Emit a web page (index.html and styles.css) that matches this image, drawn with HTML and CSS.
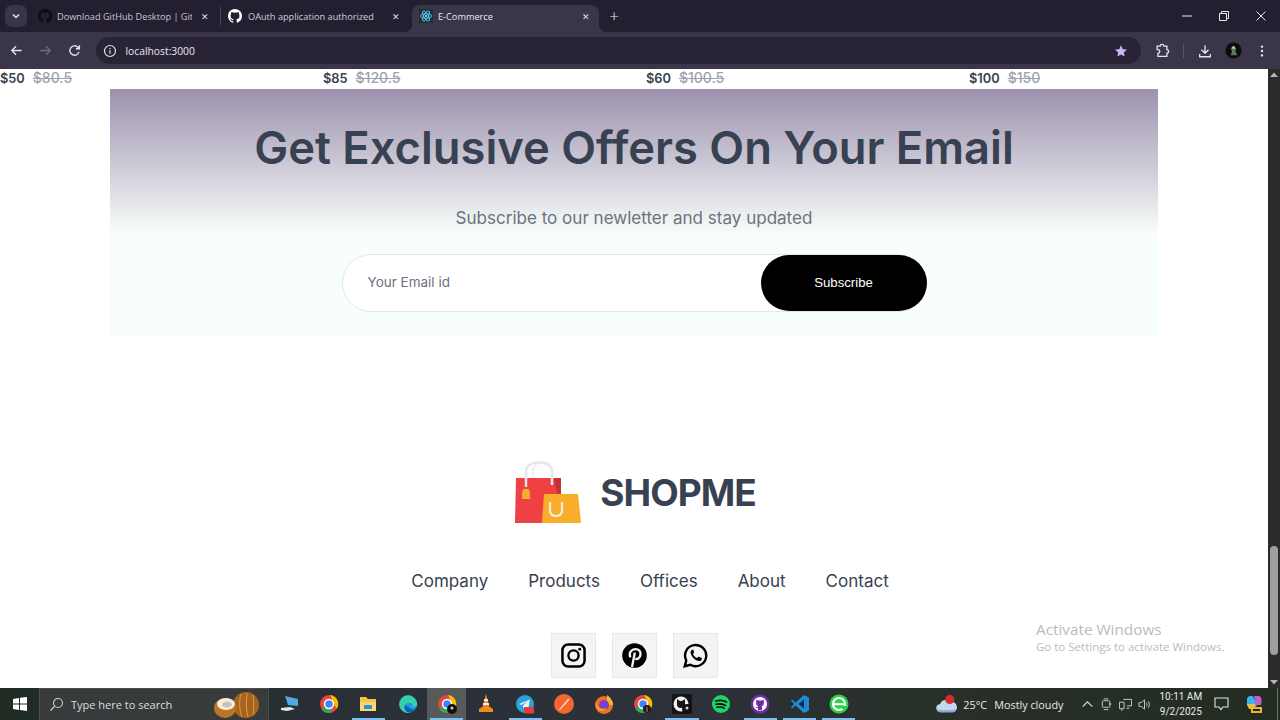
FILE: index.html
```html
<!DOCTYPE html>
<html lang="en">
<head>
<meta charset="utf-8">
<title>E-Commerce</title>
<link rel="stylesheet" href="styles.css">
</head>
<body>
<header class="chrome">
  <div class="tabstrip">
    <div class="tabmenu"><svg width="10" height="10" viewBox="0 0 10 10"><path d="M2 3.500 5 6.500 8 3.500" fill="none" stroke="#e8e6ee" stroke-width="1.500"/></svg></div>
    <div class="tab tab-a">
      <svg class="favicon" viewBox="0 0 16 16"><path fill="#0d0b12" d="M8 0C3.580 0 0 3.580 0 8c0 3.540 2.290 6.530 5.470 7.590.4.070.55-.17.55-.38v-1.340c-2.230.48-2.690-1.070-2.690-1.070-.36-.92-.89-1.170-.89-1.170-.73-.5.050-.49.050-.49.8.060 1.230.83 1.230.83.71 1.220 1.870.87 2.330.66.070-.52.28-.87.51-1.070-1.780-.2-3.640-.89-3.640-3.950 0-.87.31-1.590.82-2.150-.08-.2-.36-1.020.08-2.120 0 0 .67-.21 2.200.82a7.600 7.600 0 0 1 4 0c1.530-1.040 2.200-.82 2.200-.82.440 1.100.160 1.920.080 2.120.51.560.82 1.270.82 2.150 0 3.070-1.870 3.750-3.650 3.950.29.250.54.730.54 1.480v2.190c0 .21.150.460.550.380A8.010 8.010 0 0 0 16 8c0-4.420-3.580-8-8-8z"/></svg>
      <span class="tabtitle">Download GitHub Desktop | Git</span>
      <span class="tabclose">✕</span>
    </div>
    <i class="tabsep"></i>
    <div class="tab tab-b">
      <svg class="favicon" viewBox="0 0 16 16"><path fill="#fff" d="M8 0C3.580 0 0 3.580 0 8c0 3.540 2.290 6.530 5.470 7.590.4.070.55-.17.55-.38v-1.340c-2.230.48-2.690-1.070-2.690-1.070-.36-.92-.89-1.170-.89-1.170-.73-.5.050-.49.050-.49.8.060 1.230.83 1.230.83.71 1.220 1.870.87 2.330.66.070-.52.28-.87.51-1.070-1.780-.2-3.640-.89-3.640-3.950 0-.87.31-1.590.82-2.150-.08-.2-.36-1.020.08-2.120 0 0 .67-.21 2.200.82a7.600 7.600 0 0 1 4 0c1.530-1.040 2.200-.82 2.200-.82.440 1.100.160 1.920.080 2.120.51.560.82 1.270.82 2.150 0 3.070-1.870 3.750-3.650 3.950.29.250.54.730.54 1.480v2.190c0 .21.150.460.550.380A8.010 8.010 0 0 0 16 8c0-4.420-3.580-8-8-8z"/></svg>
      <span class="tabtitle">OAuth application authorized</span>
      <span class="tabclose">✕</span>
    </div>
    <div class="tab tab-active">
      <svg class="favicon" viewBox="0 0 16 16"><rect width="16" height="16" fill="#20303a"/><g fill="none" stroke="#61dafb" stroke-width=".9"><ellipse cx="8" cy="8" rx="6.500" ry="2.600"/><ellipse cx="8" cy="8" rx="6.500" ry="2.600" transform="rotate(60 8 8)"/><ellipse cx="8" cy="8" rx="6.500" ry="2.600" transform="rotate(120 8 8)"/></g><circle cx="8" cy="8" r="1.300" fill="#61dafb"/></svg>
      <span class="tabtitle">E-Commerce</span>
      <span class="tabclose">✕</span>
    </div>
    <span class="newtab">+</span>
    <div class="winctl">
      <svg width="10" height="10" viewBox="0 0 10 10"><path d="M0 5h10" stroke="#e8e6ee"/></svg>
      <svg width="10" height="10" viewBox="0 0 10 10"><path d="M.5 2.500h7v7h-7zM2.500 2.500v-2h7v7h-2" fill="none" stroke="#e8e6ee"/></svg>
      <svg width="10" height="10" viewBox="0 0 10 10"><path d="M.5.5l9 9M9.500.5l-9 9" stroke="#e8e6ee"/></svg>
    </div>
  </div>
  <div class="toolbar">
    <svg class="navicon" viewBox="0 0 16 16"><path d="M13.500 8H3M7.500 3.500 3 8l4.500 4.500" fill="none" stroke="#e3e1ea" stroke-width="1.500"/></svg>
    <svg class="navicon" viewBox="0 0 16 16"><path d="M2.500 8H13M8.500 3.500 13 8l-4.500 4.500" fill="none" stroke="#6f6b7c" stroke-width="1.500"/></svg>
    <svg class="navicon" viewBox="0 0 16 16"><path d="M12.800 9.500A5 5 0 1 1 11.500 4.400L13 6M13.200 2.500V6.200H9.500" fill="none" stroke="#e3e1ea" stroke-width="1.500"/></svg>
    <div class="omnibox">
      <svg class="infoicon" viewBox="0 0 14 14"><circle cx="7" cy="7" r="5.500" fill="none" stroke="#e3e1ea" stroke-width="1.200"/><path d="M7 6.200v3.600M7 4v1.200" stroke="#e3e1ea" stroke-width="1.200"/></svg>
      <span class="url">localhost:3000</span>
      <svg class="star" viewBox="0 0 16 16"><path fill="#c9b8f5" d="M8 1.500l2 4.400 4.800.5-3.600 3.200 1 4.700L8 11.900l-4.200 2.400 1-4.700L1.200 6.400 6 5.900z"/></svg>
    </div>
    <svg class="exticon" viewBox="0 0 18 18"><path d="M3.500 3.500H7a2 2 0 0 1 4 0h3.500V7.500a2 2 0 0 1 0 4v3.500H4.500V11.500a2 2 0 0 0 0-4H3.500z" fill="none" stroke="#e3e1ea" stroke-width="1.500"/></svg>
    <i class="toolsep"></i>
    <svg class="dlicon" viewBox="0 0 18 18"><path d="M9 2.500v8.500M5 7.500 9 11.500l4-4M3 12.500v3h12v-3" fill="none" stroke="#e3e1ea" stroke-width="1.500"/></svg>
    <svg class="avatar" viewBox="0 0 18 18"><circle cx="9" cy="9" r="8.500" fill="#0c0b10"/><path d="M6 6.500 9 4l3 3-1 3 2 4H6l1.500-4z" fill="#5b7a5a"/><circle cx="9" cy="6" r="1.500" fill="#c9c2b8"/></svg>
    <svg class="dots" viewBox="0 0 4 16"><circle cx="2" cy="3" r="1.400" fill="#e3e1ea"/><circle cx="2" cy="8" r="1.400" fill="#e3e1ea"/><circle cx="2" cy="13" r="1.400" fill="#e3e1ea"/></svg>
  </div>
</header>

<div class="viewport">
  <main class="page">
    <div class="prices">
      <p class="price"><b>$50</b><s>$80.5</s></p>
      <p class="price"><b>$85</b><s>$120.5</s></p>
      <p class="price"><b>$60</b><s>$100.5</s></p>
      <p class="price"><b>$100</b><s>$150</s></p>
    </div>
    <section class="offers">
      <h1>Get Exclusive Offers On Your Email</h1>
      <p class="sub">Subscribe to our newletter and stay updated</p>
      <form class="subscribe">
        <span class="placeholder">Your Email id</span>
        <span class="btn">Subscribe</span>
      </form>
    </section>
    <footer class="footer">
      <div class="brand">
        <svg class="bag" viewBox="0 0 66 63">
          <path d="M18 17V10C18 5 21 2 26 2" fill="none" stroke="#eef0f3" stroke-width="2"/>
          <path d="M11 24V11C11 4 16 1.500 24 1.500S37 4 37 11V17" fill="none" stroke="#e4e7ec" stroke-width="2.500"/>
          <path d="M1 17H46V62H0z" fill="#ef4044"/>
          <path d="M39 17H46V33H42z" fill="#c43237"/>
          <path d="M11 17V26" stroke="#e4e7ec" stroke-width="2.500"/>
          <path d="M37 17V24" stroke="#e4e7ec" stroke-width="2.500"/>
          <path d="M7 31 8.500 28H13.500L15 31V38H7z" fill="#f9ae2b"/>
          <path d="M29 33H63L66 62H27z" fill="#f9ae2b"/>
          <path d="M35 41V49C35 53 37 55 41 55S47 53 47 49V41" fill="none" stroke="#f6eddc" stroke-width="2.200"/>
        </svg>
        <span class="wordmark">SHOPME</span>
      </div>
      <nav class="links"><a>Company</a><a>Products</a><a>Offices</a><a>About</a><a>Contact</a></nav>
      <div class="socials">
        <span class="social"><svg viewBox="0 0 26 26"><rect x="1.500" y="1.500" width="23" height="23" rx="6" fill="none" stroke="#000" stroke-width="2.600"/><circle cx="13" cy="13" r="5.300" fill="none" stroke="#000" stroke-width="2.400"/><circle cx="19.500" cy="6.500" r="1.500"/></svg></span>
        <span class="social"><svg viewBox="0 0 26 26"><circle cx="13" cy="13" r="12.800"/><path d="M8.600 15C6.700 9.800 10 6.400 14 6.400c3.800 0 5.700 2.600 5.200 5.800-.5 3.200-3 5.200-5.500 4.200" fill="none" stroke="#f3f4f6" stroke-width="2.400"/><path d="M13.400 9.800 10.400 25" fill="none" stroke="#f3f4f6" stroke-width="2.400"/></svg></span>
        <span class="social"><svg viewBox="0 0 26 26"><path d="M1.800 24.200l1.600-6A11 11 0 1 1 7.600 22.600z" fill="none" stroke="#000" stroke-width="2.500"/><path d="M9.600 7c-1.800.9-2.300 3-1 5.400 1.500 3 4 5.200 6.800 6.100 2 .6 3.800-.1 4.300-1.900.1-.5 0-.8-.4-1l-2.600-1.300c-.4-.2-.7-.1-1 .2l-1 1.200c-2-.8-3.500-2.300-4.400-4.300l.9-1c.3-.3.3-.6.200-1L10.900 7.300c-.2-.4-.8-.5-1.300-.3z"/></svg></span>
      </div>
    </footer>
    <div class="watermark"><strong>Activate Windows</strong><span>Go to Settings to activate Windows.</span></div>
  </main>
  <aside class="scrollbar">
    <svg width="12" height="12" viewBox="0 0 12 12"><path d="M6 3.500 10 8H2z" fill="#b4b4b4"/></svg>
    <div class="track"><i class="thumb"></i></div>
    <svg width="12" height="12" viewBox="0 0 12 12"><path d="M6 8.500 10 4H2z" fill="#b4b4b4"/></svg>
  </aside>
</div>

<div class="taskbar">
  <div class="start"><svg width="14" height="14" viewBox="0 0 14 14"><path fill="#fff" d="M0 2l6-1v5.500H0zM7 .8 14 0v6.500H7zM0 7.500h6V13l-6-1zM7 7.500h7V14l-7-1z"/></svg></div>
  <div class="search">
    <svg width="15" height="15" viewBox="0 0 15 15"><circle cx="9" cy="6" r="4.500" fill="none" stroke="#cfd2cf" stroke-width="1.100"/><path d="M5.800 9.200 1.500 13.500" stroke="#cfd2cf" stroke-width="1.200"/></svg>
    <span>Type here to search</span>
    <svg class="coconut" width="46" height="28" viewBox="0 0 46 28"><ellipse cx="32" cy="14" rx="13" ry="13" fill="#a8641d"/><path d="M27 3c-2 7-2 15 1 23M33 2c-1 8-1 16 1 24M39 4c1 6 1 14 0 20" stroke="#d9984a" fill="none"/><ellipse cx="11" cy="17" rx="11" ry="10" fill="#bd7424"/><ellipse cx="12" cy="13" rx="9" ry="6" fill="#f6efe0"/><ellipse cx="13" cy="13.500" rx="5" ry="3" fill="#c9c4b6"/></svg>
  </div>
  <div class="apps">
    <span class="app"><svg viewBox="0 0 20 20"><path d="M5 2l13 3v7L8 11z" fill="#4fa8e0"/><path d="M1 14l9-1 5 2-8 2-6-1z" fill="#dfe6ee"/></svg></span>
    <span class="app"><svg viewBox="0 0 20 20"><circle cx="10" cy="10" r="9" fill="#e8453c"/><path d="M10 10 2.200 14.500A9 9 0 0 0 10 19c1 0 2-.2 3-.5z" fill="#34a853"/><path d="M10 1a9 9 0 0 1 8.300 13L13 6z" fill="#fbbc05" transform="rotate(8 10 10)"/><circle cx="10" cy="10" r="4.500" fill="#4285f4" stroke="#fff" stroke-width="1.500"/></svg></span>
    <span class="app is-open"><svg viewBox="0 0 20 20"><path d="M2 3h6l2 2h8v12H2z" fill="#f5c542"/><path d="M2 8h16v9H2z" fill="#f7d774"/><rect x="6" y="11" width="8" height="4" fill="#2f8fd6"/></svg></span>
    <span class="app"><svg viewBox="0 0 20 20"><circle cx="10" cy="10" r="9" fill="#1b9de2"/><path d="M1.500 12c1 5 7 8 11 6.500C9 19 5 15 7 11c1-2 5-3 7-1.500 1 1 1 2 0 3h5c1-4-2-11-9-11C5 1.500 2 5 1.500 12z" fill="#38d0a5"/><path d="M7 11c-2 4 2 8 5.500 7.500 2-.5 4-1.500 5.500-3.500-3 1-6 .5-7-1.500z" fill="#0e5fb0"/></svg></span>
    <span class="app is-active is-open"><svg viewBox="0 0 20 20"><circle cx="10" cy="10" r="9" fill="#e8453c"/><path d="M10 10 2.200 14.500A9 9 0 0 0 10 19c1 0 2-.2 3-.5z" fill="#34a853"/><path d="M10 1a9 9 0 0 1 8.300 13L13 6z" fill="#fbbc05" transform="rotate(8 10 10)"/><circle cx="10" cy="10" r="4.500" fill="#4285f4" stroke="#fff" stroke-width="1.500"/><circle cx="15" cy="15" r="5" fill="#111"/><circle cx="15" cy="14" r="1.500" fill="#ccc"/></svg></span>
    <span class="app"><svg viewBox="0 0 20 20"><path d="M10 0l3.500 13h-7z" fill="#f5831f"/><path d="M8.300 5h3.400l.6 2.300H7.700zM7.300 9h5.400l.5 2H6.800z" fill="#f3f3f3"/><path d="M3 15l3-2h8l3 2v3H3z" fill="#f08a1d"/></svg></span>
    <span class="app is-open"><svg viewBox="0 0 20 20"><circle cx="10" cy="10" r="9" fill="#2aa3db"/><path d="M4 10l11-4.500-2 10-3.500-2.500-1.500 1.500V11.500l5-4.500-6.500 4z" fill="#eaf6fc"/><rect x="9" y="13" width="10" height="6.500" rx="1" fill="#e53c3c"/></svg></span>
    <span class="app"><svg viewBox="0 0 20 20"><circle cx="10" cy="10" r="10" fill="#f4662d"/><path d="M5 15.500 14 5c.8-.7 1.800.3 1.200 1L6 16z" fill="#fbe3d5"/></svg></span>
    <span class="app"><svg viewBox="0 0 20 20"><circle cx="10" cy="11" r="9" fill="#f16f23"/><path d="M13 1c3 2 6 6 6 10h-6z" fill="#fcb32c"/><circle cx="10" cy="11" r="5" fill="#7a3fd0"/><path d="M2 8c1 6 6 8 11 6-2 3-8 5-11-1z" fill="#f9a01b"/></svg></span>
    <span class="app"><svg viewBox="0 0 20 20"><circle cx="10" cy="10" r="9" fill="#e8453c"/><path d="M10 10 2.200 14.500A9 9 0 0 0 10 19c1 0 2-.2 3-.5z" fill="#34a853"/><path d="M10 1a9 9 0 0 1 8.300 13L13 6z" fill="#fbbc05" transform="rotate(8 10 10)"/><circle cx="10" cy="10" r="4.500" fill="#4285f4" stroke="#fff" stroke-width="1.500"/><circle cx="14" cy="15" r="4" fill="#1c1c1c"/><rect x="13.300" y="13" width="1.400" height="5" fill="#c44"/></svg></span>
    <span class="app is-open"><svg viewBox="0 0 20 20"><rect width="20" height="20" rx="2" fill="#141414"/><circle cx="9" cy="10" r="7.500" fill="#f1f1f1"/><path d="M5 5l3 2h2l3-2v5c0 3-1.500 4-4 4s-4-1-4-4z" fill="#141414"/><circle cx="15" cy="15" r="5" fill="#111"/><circle cx="15" cy="14" r="1.500" fill="#ccc"/></svg></span>
    <span class="app"><svg viewBox="0 0 20 20"><circle cx="10" cy="10" r="9" fill="#1ed760"/><path d="M4.500 7c4-1 8-1 11 1M5 10.300c3.500-.8 7-.5 9.500 1.200M5.800 13.300c2.800-.6 5.500-.4 7.500 1" fill="none" stroke="#111" stroke-width="1.600" stroke-linecap="round"/></svg></span>
    <span class="app is-open"><svg viewBox="0 0 20 20"><circle cx="10" cy="10" r="9.500" fill="#6f2da8"/><circle cx="10" cy="10" r="7" fill="#fff"/><path d="M6.500 5.500l2 1h3l2-1 .3 2.500c.5 2.500-1 4-2.300 4.200.5.500.5 1 .5 1.500v2.500H8V14c-1.500.3-2.200-.4-2.700-1.300.6.200 1.500.8 2.700.3 0-.3.100-.6.400-.8C7 12 5.800 10.500 6.200 8z" fill="#6f2da8"/></svg></span>
    <span class="app is-open"><svg viewBox="0 0 20 20"><path d="M14 1l5 2.500v13L14 19 5.500 11.500 2 14.500.8 13.600 4 10 .8 6.400 2 5.500l3.500 3z" fill="#1f8ad2"/><path d="M14 5.500 8.500 10l5.500 4.500z" fill="#0c2a44"/></svg></span>
    <span class="app is-open"><svg viewBox="0 0 20 20"><circle cx="10" cy="10" r="9.500" fill="#2dd24b"/><circle cx="10" cy="10" r="6" fill="none" stroke="#fff" stroke-width="2.200"/><path d="M4.500 10.200h11" stroke="#fff" stroke-width="2"/><path d="M13 12h5v3h-5z" fill="#2dd24b"/></svg></span>
  </div>
  <div class="tray">
    <svg class="weather" width="22" height="22" viewBox="0 0 24 22"><path d="M5 20a4.500 4.500 0 0 1-.5-9C6 6 12 5 15 9a5 5 0 0 1 4 11z" fill="#c4d7ef"/><path d="M1 17c5 1 15 1 21 0a5 5 0 0 1-3 3H5a4.500 4.500 0 0 1-4-3z" fill="#86a9d8"/><circle cx="15" cy="6" r="5" fill="#d22c2c"/></svg>
    <span class="temp">25°C</span><span class="cond">Mostly cloudy</span>
    <svg class="tray-i chev" viewBox="0 0 12 12"><path d="M1.500 8 6 3.500 10.500 8" fill="none" stroke="#d8dcd8" stroke-width="1.100"/></svg>
    <svg class="tray-i" viewBox="0 0 12 14"><rect x="1.500" y="3" width="8" height="7" rx="1" fill="none" stroke="#cfd3cf"/><path d="M3 1h5M3 12.500h5M10.500 5.500v2" stroke="#cfd3cf"/></svg>
    <svg class="tray-i net" viewBox="0 0 14 14"><path d="M4.500 1.500h9v7h-5M.5 4.500h5v7h-5zM2 13h2M8 11h3" fill="none" stroke="#cfd3cf"/></svg>
    <svg class="tray-i" viewBox="0 0 14 14"><path d="M1 5h2.500L7 2v10L3.500 9H1z" fill="none" stroke="#cfd3cf"/><path d="M9 5c.8 1 .8 3 0 4M11 3.500c1.600 2 1.600 5 0 7" fill="none" stroke="#cfd3cf"/></svg>
    <div class="clock"><span>10:11 AM</span><span>9/2/2025</span></div>
    <svg class="notif" width="15" height="14" viewBox="0 0 15 14"><path d="M1 1h13v9H9l-2 2.500L5 10H1z" fill="none" stroke="#e4e6e4" stroke-width="1.100"/></svg>
    <svg class="copilot" width="20" height="20" viewBox="0 0 20 20"><path d="M3 5c1-4 6-4 7-1l3 8H3z" fill="#38b6e8"/><path d="M10 2h5c3 1 3 5 2 9h-5z" fill="#c45ed0"/><path d="M3 10h8l1 5H5z" fill="#e7c53a"/><rect x="7" y="13" width="11" height="6" fill="#e8b923"/><rect x="9" y="15" width="7" height="2" fill="#222"/></svg>
    <i class="showdesk"></i>
  </div>
</div>
</body>
</html>
```

FILE: styles.css
```css
* { box-sizing: border-box; }
html, body { margin: 0; height: 100%; }
body {
  width: 1280px; height: 720px; overflow: hidden;
  display: flex; flex-direction: column;
  font-family: "Liberation Sans", Arial, sans-serif;
  background: #fff;
}
.chrome { height: 69px; flex: none; color: #e8e6ee; font-family: "Open Sans", "Liberation Sans", sans-serif; }
.tabstrip { height: 32px; background: #231f30; display: flex; align-items: flex-start; position: relative; padding: 5px 0 0 5px; }
.tabmenu { width: 22px; height: 22px; border-radius: 7px; background: #3a3548; display: flex; align-items: center; justify-content: center; }
.tab { height: 27px; display: flex; align-items: center; padding: 0 8px 5px 0; font-size: 9.200px; }
.tab-a { width: 182px; margin-left: 11px; color: #c7c4d1; }
.tab-b { width: 183px; margin-left: 7px; color: #cfcdd8; }
.tab-active { width: 187px; margin-left: 1px; padding-left: 7px; padding-right: 6px; background: #3a3548; border-radius: 8px 8px 0 0; color: #ece9f3; position: relative; }
.tab-active::before, .tab-active::after { content: ""; position: absolute; bottom: 0; width: 8px; height: 8px; }
.tab-active::before { left: -8px; background: radial-gradient(circle at 0 0, transparent 8px, #3a3548 8.500px); }
.tab-active::after { right: -8px; background: radial-gradient(circle at 100% 0, transparent 8px, #3a3548 8.500px); }
.tabsep { width: 1px; height: 18px; background: #4a4558; margin-top: 2px; }
.favicon { width: 14px; height: 14px; flex: none; margin-right: 5px; }
.tab-b .favicon { margin-right: 6px; }
.tabtitle { flex: 1; white-space: nowrap; overflow: hidden; margin-right: 6px; }
.tabclose { width: 14px; font-size: 9px; text-align: center; flex: none; color: #e0deea; }
.newtab { width: 16px; margin-left: 7px; font-size: 17px; line-height: 22px; text-align: center; font-weight: 300; }
.winctl { position: absolute; right: 14px; top: 11px; display: flex; gap: 27px; }
.toolbar { height: 37px; background: #3a3548; display: flex; align-items: center; padding-left: 8.500px; }
.navicon { width: 15px; height: 15px; margin-right: 14px; flex: none; }
.omnibox { width: 1045px; height: 27px; border-radius: 14px; background: #282335; display: flex; align-items: center; padding: 0 13px 0 7px; flex: none; }
.infoicon { width: 14px; height: 14px; margin-right: 9px; }
.url { flex: 1; font-size: 10.300px; color: #ece9f3; }
.star { width: 14px; height: 14px; }
.exticon { width: 16px; height: 16px; margin-left: 13px; flex: none; }
.toolsep { width: 1px; height: 14px; background: #57526a; margin-left: 13px; }
.dlicon { width: 16px; height: 16px; margin-left: 13px; flex: none; }
.avatar { width: 17px; height: 17px; margin-left: 12px; flex: none; }
.dots { width: 4px; height: 14px; margin-left: 18px; flex: none; }

.viewport { height: 619px; flex: none; display: flex; overflow: hidden; }
.page { flex: 1; position: relative; overflow: hidden; font-family: Inter, "Open Sans", sans-serif; color: #374151; }
.prices { height: 20px; display: grid; grid-template-columns: repeat(4, 323px); align-items: end; overflow: hidden; }
.price { margin: 0; display: flex; gap: 8px; align-items: baseline; height: 20px; line-height: 18px; }
.price b { font-size: 12.800px; font-weight: 600; color: #374151; }
.price s { font-size: 14px; font-weight: 500; color: #9ca3af; }
.offers {
  width: 1048px; height: 247px; margin-left: 110px;
  background: linear-gradient(180deg, #9d91ae 0%, #f8fefa 59%, #f8fefa 100%);
  display: flex; flex-direction: column; align-items: center;
  padding-top: 28px;
}
.offers h1 { margin: 0; font-size: 45.300px; line-height: 62px; font-weight: 600; color: #374151; white-space: nowrap; }
.sub { margin: 28px 0 0; font-size: 17.050px; line-height: 22px; color: #6b7280; }
.subscribe { width: 585px; height: 58px; margin-top: 25px; background: #fff; border: 1px solid #e5e7eb; border-radius: 29px; display: flex; align-items: center; justify-content: space-between; padding-left: 25px; }
.placeholder { font-size: 13.500px; color: #6b7280; margin-bottom: 2px; }
.btn { width: 166px; height: 56px; background: #000; color: #fff; border-radius: 28px; display: flex; align-items: center; justify-content: center; font-size: 13.200px; font-family: "Liberation Sans", sans-serif; padding-bottom: 2px; margin-right: -1px; }
.footer { display: flex; flex-direction: column; align-items: center; padding-top: 125px; }
.brand { display: flex; align-items: center; gap: 19px; height: 63px; margin-left: 3px; }
.bag { width: 66px; height: 63px; }
.wordmark { font-size: 37px; font-weight: 700; color: #374151; letter-spacing: -.95px; }
.links { display: flex; gap: 40px; margin-top: 44px; margin-left: 32px; font-size: 17px; line-height: 26px; color: #374151; }
.socials { display: flex; gap: 16px; margin-top: 39px; }
.social { width: 45px; height: 45px; background: #f3f4f6; border: 1px solid #e5e7eb; display: flex; align-items: center; justify-content: center; }
.social svg { width: 25px; height: 25px; }
.watermark { position: absolute; left: 1036px; top: 551px; display: flex; flex-direction: column; color: #b9bcc0; font-family: "Open Sans", sans-serif; }
.watermark strong { font-weight: 400; font-size: 15.300px; line-height: 19px; }
.watermark span { font-size: 11.500px; line-height: 16px; }
.scrollbar { width: 12px; flex: none; background: #2b2b2b; display: flex; flex-direction: column; }
.track { flex: 1; position: relative; }
.thumb { position: absolute; left: 2px; right: 2px; top: 465px; height: 109px; border-radius: 4px; background: #9e9e9e; }

.taskbar { height: 32px; flex: none; display: flex; align-items: stretch; background: linear-gradient(90deg, #202b24 0%, #2b3038 30%, #2d3139 55%, #28302a 70%, #232c21 100%); color: #e8eae8; font-family: "Open Sans", sans-serif; }
.start { width: 39px; display: flex; align-items: center; justify-content: center; }
.search { width: 230px; background: #383b3c; border: 1px solid #4b4e4e; border-width: 1px 1px 0; display: flex; align-items: center; padding-left: 9px; font-size: 11px; color: #dcdedc; position: relative; }
.search span { margin-left: 7px; }
.coconut { position: absolute; left: 174px; top: 2px; }
.apps { display: flex; margin-left: 1.500px; flex: none; }
.app { width: 39.200px; height: 32px; display: flex; align-items: center; justify-content: center; position: relative; }
.app svg { width: 20px; height: 20px; }
.app.is-active { background: #565a59; }
.app.is-open::after { content: ""; position: absolute; left: 3px; right: 3px; bottom: 0; height: 2px; background: #7fbef0; }
.tray { flex: 1; display: flex; align-items: center; padding-left: 78px; font-size: 10.800px; white-space: nowrap; }
.weather { flex: none; margin-right: 5px; }
.temp { width: 31px; flex: none; }
.cond { width: 87px; flex: none; }
.tray-i { width: 13px; height: 13px; flex: none; margin-right: 6px; }
.clock { width: 44px; display: flex; flex-direction: column; align-items: center; flex: none; font-family: Roboto, sans-serif; font-size: 10px; line-height: 15px; margin-left: 1.500px; }
.notif { margin-left: 11.500px; flex: none; }
.copilot { margin-left: 15px; flex: none; }
.showdesk { width: 1px; height: 32px; background: #6b6f68; margin-left: 12.500px; flex: none; }
```
